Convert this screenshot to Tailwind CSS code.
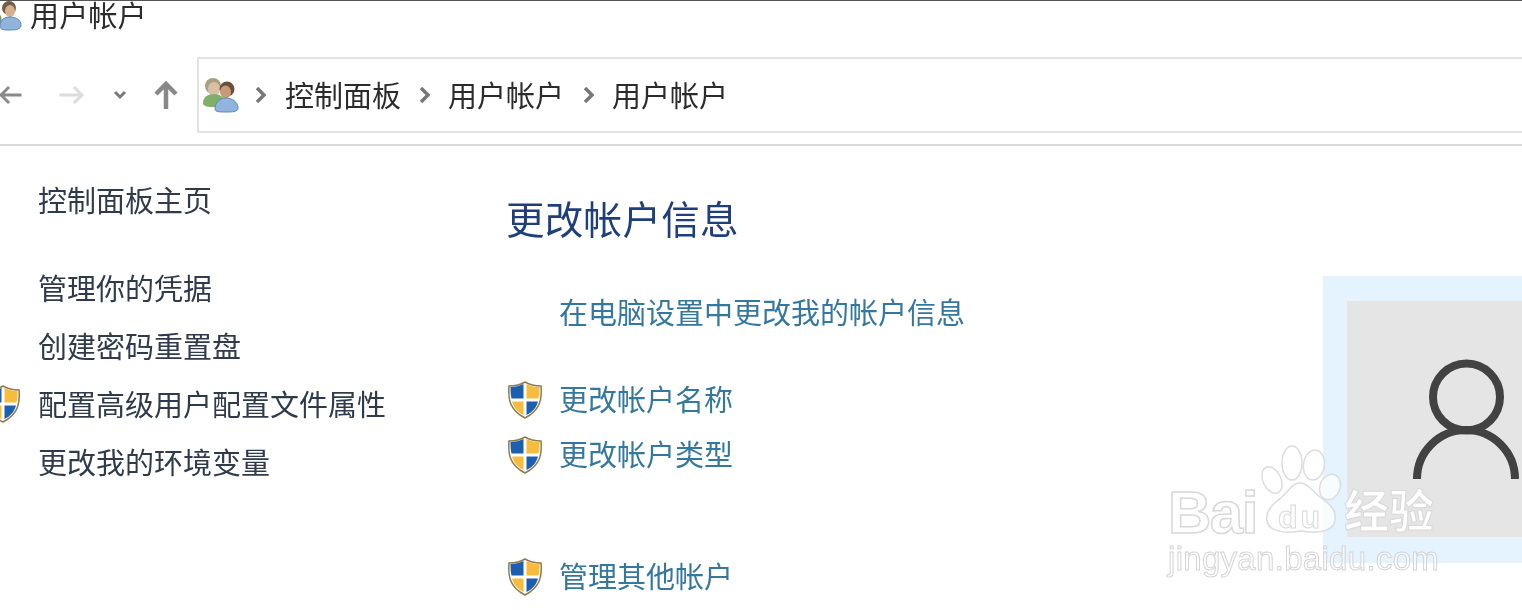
<!DOCTYPE html>
<html lang="zh-CN">
<head>
<meta charset="utf-8">
<script src="https://cdn.jsdelivr.net/npm/@tailwindcss/browser@4"></script>
</head>
<body class="bg-white">
<div class="relative w-[1522px] h-[610px] overflow-hidden bg-white blur-[0.4px] font-['Noto_Sans_CJK_SC','Noto_Sans',sans-serif] text-[29px] font-normal text-[#333]">
  <!-- title bar -->
  <div class="h-[31px] border-t border-[#555] flex items-center">
    <svg class="w-[24px] h-[32px] -ml-[1px] shrink-0" viewBox="0 0 24 32">
      <circle cx="10" cy="8" r="7" fill="#6f5f49"/>
      <ellipse cx="11" cy="11" rx="5" ry="6" fill="#d9b08c"/>
      <path d="M0 14c3 2 3 6 2 10l-2 0z" fill="#7ba05e"/>
      <path d="M1 26c0-6 4-9 10-9s11 3 11 8c0 4-4 5-11 5-6 0-10 0-10-4z" fill="#8fb4de" stroke="#5f86b8"/>
    </svg>
    <span class="ml-[7px] -mt-[3px] leading-[29px] text-[#2b2b2b] tracking-[0.200px]">用户帐户</span>
  </div>
  <!-- address row -->
  <div class="h-[115px] pt-[14px] border-b-2 border-[#d9d9d9] flex items-center">
    <svg class="w-[24px] h-[24px] -ml-[1px] shrink-0" viewBox="0 0 24 24" fill="none" stroke="#8a8a8a" stroke-width="3" stroke-linecap="square"><path d="M22 12H3M10 5l-7 7 7 7" transform="translate(-1 0)"/></svg>
    <svg class="w-[26px] h-[24px] ml-[36px] shrink-0" viewBox="0 0 26 24" fill="none" stroke="#dcdcdc" stroke-width="3" stroke-linecap="square"><path d="M2 12h21M16 5l7 7-7 7"/></svg>
    <svg class="w-[14px] h-[10px] ml-[28px] shrink-0" viewBox="0 0 14 10" fill="none" stroke="#7a7a7a" stroke-width="3"><path d="M2 2l5 5 5-5"/></svg>
    <svg class="w-[24px] h-[30px] ml-[27px] shrink-0" viewBox="0 0 24 30" fill="none" stroke="#888" stroke-width="4.5"><path d="M12 29V4M2 14L12 4l10 10"/></svg>
    <div class="ml-[19px] flex-1 h-[76px] border-y-2 border-l-2 border-[#e2e2e2] flex items-center">
      <svg class="w-[38px] h-[36px] ml-[3px] shrink-0" viewBox="0 0 38 36">
        <circle cx="11" cy="9" r="8" fill="#a8a082"/>
        <ellipse cx="12" cy="12" rx="6" ry="7" fill="#d9bfa3"/>
        <path d="M1 26c0-6 5-9 11-9s10 3 10 8-5 5-10 5-11 0-11-4z" fill="#7fb069"/>
        <circle cx="25" cy="12" r="7.500" fill="#6b4f3a"/>
        <ellipse cx="23.500" cy="15" rx="5.500" ry="6.500" fill="#c99a78"/>
        <path d="M13 32c0-7 5-11 11-11s12 4 12 10c0 4-6 4-12 4s-11 0-11-3z" fill="#8fb4de" stroke="#5f86b8"/>
      </svg>
      <svg class="w-[11px] h-[18px] ml-[15px] shrink-0" viewBox="0 0 11 18" fill="none" stroke="#777" stroke-width="3.500"><path d="M2 2l7 7-7 7"/></svg>
      <span class="ml-[19px] text-[#2b2b2b]">控制面板</span>
      <svg class="w-[11px] h-[18px] ml-[18px] shrink-0" viewBox="0 0 11 18" fill="none" stroke="#777" stroke-width="3.500"><path d="M2 2l7 7-7 7"/></svg>
      <span class="ml-[18px] text-[#2b2b2b]">用户帐户</span>
      <svg class="w-[11px] h-[18px] ml-[19px] shrink-0" viewBox="0 0 11 18" fill="none" stroke="#777" stroke-width="3.500"><path d="M2 2l7 7-7 7"/></svg>
      <span class="ml-[18px] text-[#2b2b2b]">用户帐户</span>
    </div>
  </div>
  <!-- body -->
  <div class="flex">
    <!-- sidebar -->
    <div class="w-[507px] shrink-0 pt-[31px] leading-[44px] text-[#2f3a4a]">
      <div class="pl-[38px]">控制面板主页</div>
      <div class="pl-[38px] mt-[44px]">管理你的凭据</div>
      <div class="pl-[38px] mt-[14px]">创建密码重置盘</div>
      <div class="flex items-center mt-[14px]">
        <svg class="w-[36px] h-[38px] -ml-[15px] mr-[17px] mt-[2px] shrink-0" viewBox="0 0 36 38">
          <path d="M18 1c5 3 10 4 16 4 1 12 0 24-16 32C2 29 1 17 2 5c6 0 11-1 16-4z" fill="#fff" stroke="#8f7a4a" stroke-width="1.500"/>
          <path d="M16.500 3C12 5 8 6 3.500 6c0 4 0 8 1 11.500h12z" fill="#1c5fb0"/>
          <path d="M19.500 3c4 2 8 3 13 3 0 4 0 8-1 11.500h-12z" fill="#f7bc3e"/>
          <path d="M5 20.500h11.500V34C10 31 6.500 26 5 20.500z" fill="#f7bc3e"/>
          <path d="M19.500 20.500H31c-1.500 5.500-5 10.500-11.500 13.500z" fill="#1c5fb0"/>
        </svg>
        <span>配置高级用户配置文件属性</span>
      </div>
      <div class="pl-[38px] mt-[14px]">更改我的环境变量</div>
    </div>
    <!-- main -->
    <div class="flex-1 pt-[43px] text-[#35789f]">
      <h1 class="text-[38.500px] leading-[56px] font-normal text-[#1f3f7c] tracking-[0.300px] -ml-[1px]">更改帐户信息</h1>
      <div class="pl-[52px] mt-[44px] leading-[44px]">在电脑设置中更改我的帐户信息</div>
      <div class="flex items-center mt-[44px] h-[44px]">
        <svg class="w-[36px] h-[38px] mr-[16px] mt-[2px] shrink-0" viewBox="0 0 36 38">
          <path d="M18 1c5 3 10 4 16 4 1 12 0 24-16 32C2 29 1 17 2 5c6 0 11-1 16-4z" fill="#fff" stroke="#8f7a4a" stroke-width="1.500"/>
          <path d="M16.500 3C12 5 8 6 3.500 6c0 4 0 8 1 11.500h12z" fill="#1c5fb0"/>
          <path d="M19.500 3c4 2 8 3 13 3 0 4 0 8-1 11.500h-12z" fill="#f7bc3e"/>
          <path d="M5 20.500h11.500V34C10 31 6.500 26 5 20.500z" fill="#f7bc3e"/>
          <path d="M19.500 20.500H31c-1.500 5.500-5 10.500-11.500 13.500z" fill="#1c5fb0"/>
        </svg>
        <span>更改帐户名称</span>
      </div>
      <div class="flex items-center mt-[11px] h-[44px]">
        <svg class="w-[36px] h-[38px] mr-[16px] mt-[2px] shrink-0" viewBox="0 0 36 38">
          <path d="M18 1c5 3 10 4 16 4 1 12 0 24-16 32C2 29 1 17 2 5c6 0 11-1 16-4z" fill="#fff" stroke="#8f7a4a" stroke-width="1.500"/>
          <path d="M16.500 3C12 5 8 6 3.500 6c0 4 0 8 1 11.500h12z" fill="#1c5fb0"/>
          <path d="M19.500 3c4 2 8 3 13 3 0 4 0 8-1 11.500h-12z" fill="#f7bc3e"/>
          <path d="M5 20.500h11.500V34C10 31 6.500 26 5 20.500z" fill="#f7bc3e"/>
          <path d="M19.500 20.500H31c-1.500 5.500-5 10.500-11.500 13.500z" fill="#1c5fb0"/>
        </svg>
        <span>更改帐户类型</span>
      </div>
      <div class="flex items-center mt-[78px] h-[44px]">
        <svg class="w-[36px] h-[38px] mr-[16px] mt-[2px] shrink-0" viewBox="0 0 36 38">
          <path d="M18 1c5 3 10 4 16 4 1 12 0 24-16 32C2 29 1 17 2 5c6 0 11-1 16-4z" fill="#fff" stroke="#8f7a4a" stroke-width="1.500"/>
          <path d="M16.500 3C12 5 8 6 3.500 6c0 4 0 8 1 11.500h12z" fill="#1c5fb0"/>
          <path d="M19.500 3c4 2 8 3 13 3 0 4 0 8-1 11.500h-12z" fill="#f7bc3e"/>
          <path d="M5 20.500h11.500V34C10 31 6.500 26 5 20.500z" fill="#f7bc3e"/>
          <path d="M19.500 20.500H31c-1.500 5.500-5 10.500-11.500 13.500z" fill="#1c5fb0"/>
        </svg>
        <span>管理其他帐户</span>
      </div>
    </div>
    <!-- avatar -->
    <div class="w-[199px] shrink-0 pt-[130px]">
      <div class="h-[287px] bg-[#e5f3fe] pl-[24px] pt-[25px]">
        <div class="h-[236px] bg-[#e5e5e5] flex items-start">
          <svg class="ml-[63px] mt-[58px] w-[112px] h-[125px] shrink-0" viewBox="0 0 112 125" fill="none" stroke="#424242" stroke-width="8">
            <circle cx="56.500" cy="38" r="33.500"/>
            <path d="M7 120A49 49 0 0 1 105 120"/>
          </svg>
        </div>
      </div>
    </div>
  </div>
  <!-- watermark -->
  <div class="absolute left-[1168px] top-[445px] w-[275px] h-[135px] pointer-events-none">
    <svg class="absolute left-[92px] top-0 w-[82px] h-[90px]" viewBox="0 0 82 90" fill="rgba(255,255,255,.7)" stroke="#dcdcdc" stroke-width="1.500">
      <ellipse cx="12" cy="35" rx="9" ry="14" transform="rotate(-25 12 35)"/>
      <ellipse cx="32" cy="18" rx="10" ry="17"/>
      <ellipse cx="54" cy="20" rx="10.500" ry="15" transform="rotate(8 54 20)"/>
      <ellipse cx="70" cy="42" rx="10" ry="13" transform="rotate(20 70 42)"/>
      <path d="M40 38c8 0 12 8 20 14 8 6 17 12 15 24-2 10-16 13-34 10-18 3-32 0-34-10-2-12 8-18 15-24 7-6 10-14 18-14z"/>
    </svg>
    <div class="absolute left-0 top-[30px] font-['Liberation_Sans',sans-serif] text-[60px] leading-[76px] font-bold text-white/70 [-webkit-text-stroke:1.500px_#d8d8d8] tracking-[-1.500px]">Bai</div>
    <div class="absolute left-[110px] top-[52px] font-['Liberation_Sans',sans-serif] text-[32px] leading-[40px] font-bold text-white/70 [-webkit-text-stroke:1px_#d8d8d8] tracking-[3px]">du</div>
    <div class="absolute left-[176px] top-[34px] text-[45px] leading-[60px] font-bold text-white [-webkit-text-stroke:1px_#d8d8d8]">经验</div>
    <div class="absolute left-0 top-[94px] font-['Liberation_Sans',sans-serif] text-[33px] leading-[40px] font-normal text-white/60 [-webkit-text-stroke:1px_#d4d4d4] tracking-[0.300px]">jingyan.baidu.com</div>
  </div>
</div>
</body>
</html>
